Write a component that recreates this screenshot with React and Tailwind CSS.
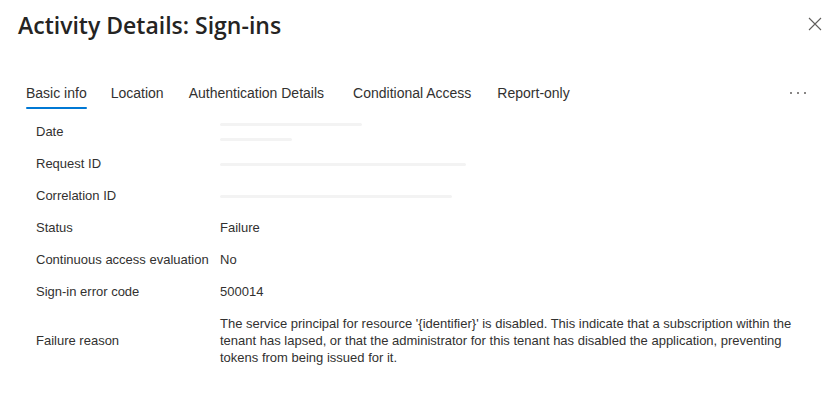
import React from 'react';

// Sign-in activity details panel (Basic info tab)

const tabs = [
    { label: 'Basic info', ml: 0 },
    { label: 'Location', ml: 24 },
    { label: 'Authentication Details', ml: 25 },
    { label: 'Conditional Access', ml: 29 },
    { label: 'Report-only', ml: 26 },
];

function Redacted({ widths }) {
    return (
        <div className="flex flex-col gap-[12px]">
            {widths.map((w, i) => (
                <div key={i} className="h-[3px] rounded-sm bg-[#f3f3f3]" style={{ width: w }} />
            ))}
        </div>
    );
}

function Row({ label, children, tall = false }) {
    return (
        <div className={`grid grid-cols-[184px_1fr] items-center ${tall ? 'py-[7px]' : 'h-8'}`}>
            <div className="text-[13px] text-[#323130]">{label}</div>
            <div className="text-[13px] text-[#323130]">{children}</div>
        </div>
    );
}

export default function App() {
    return (
        <div
            className="w-[827px] h-[405px] overflow-hidden bg-white text-[#323130]"
            style={{ fontFamily: '"Liberation Sans", Arial, sans-serif' }}
        >
            {/* header */}
            <div className="flex items-start justify-between pl-[18px] pr-[1px] pt-[9px]">
                <h1
                    className="text-[23px] font-semibold leading-[32px] text-[#252423]"
                    style={{ fontFamily: '"Open Sans", sans-serif' }}
                >
                    Activity Details: Sign-ins
                </h1>
                <button className="mt-[4px] p-[4px] text-[#605e5c]">
                    <svg width="14" height="14" viewBox="0 0 14 14" fill="none" stroke="currentColor" strokeWidth="1.1">
                        <path d="M1 1 L13 13 M13 1 L1 13" />
                    </svg>
                </button>
            </div>

            {/* tabs */}
            <div className="mt-[42px] flex items-center justify-between pl-[26px] pr-[21px]">
                <div className="flex items-center">
                    {tabs.map((t, i) => (
                        <div
                            key={t.label}
                            className="relative pb-[6px] text-[14px] leading-[20px] text-[#323130]"
                            style={{ marginLeft: t.ml }}
                        >
                            {t.label}
                            {i === 0 && (
                                <div className="absolute left-0 right-0 bottom-0 h-[2px] rounded-full bg-[#0078d4]" />
                            )}
                        </div>
                    ))}
                </div>
                <div className="flex items-center gap-[5px] pb-[6px]">
                    <div className="h-[2px] w-[2px] rounded-full bg-[#605e5c]" />
                    <div className="h-[2px] w-[2px] rounded-full bg-[#605e5c]" />
                    <div className="h-[2px] w-[2px] rounded-full bg-[#605e5c]" />
                </div>
            </div>

            {/* fields */}
            <div className="mt-[7px] pl-[36px] pr-[20px]">
                <Row label="Date">
                    <Redacted widths={[142, 72]} />
                </Row>
                <Row label="Request ID">
                    <Redacted widths={[246]} />
                </Row>
                <Row label="Correlation ID">
                    <Redacted widths={[232]} />
                </Row>
                <Row label="Status">Failure</Row>
                <Row label="Continuous access evaluation">No</Row>
                <Row label="Sign-in error code">500014</Row>
                <Row label="Failure reason" tall>
                    <div className="leading-[17px] whitespace-nowrap">
                        The service principal for resource '{'{identifier}'}' is disabled. This indicate that a subscription within the
                        <br />
                        tenant has lapsed, or that the administrator for this tenant has disabled the application, preventing
                        <br />
                        tokens from being issued for it.
                    </div>
                </Row>
            </div>
        </div>
    );
}
